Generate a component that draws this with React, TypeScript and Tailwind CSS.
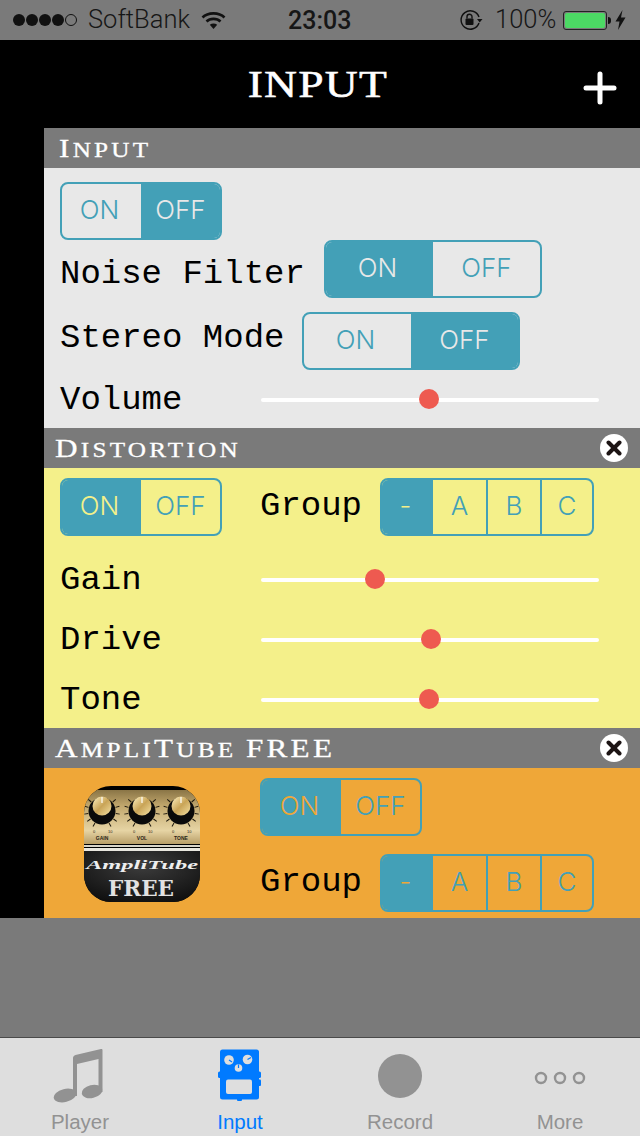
import React from 'react';

const knobs = [
  { x: 18, label: 'GAIN' },
  { x: 58, label: 'VOL' },
  { x: 97, label: 'TONE' },
];

function AmpIcon() {
  return (
    <svg width="116" height="116" viewBox="0 0 116 116">
      <defs>
        <clipPath id="ampClip">
          <rect width="116" height="116" rx="27" />
        </clipPath>
        <linearGradient id="gold" x1="0" y1="0" x2="0" y2="1">
          <stop offset="0" stopColor="#8a7546" />
          <stop offset="0.3" stopColor="#c2a86e" />
          <stop offset="0.75" stopColor="#e6d4a4" />
          <stop offset="1" stopColor="#b89e68" />
        </linearGradient>
        <linearGradient id="cap" x1="0" y1="0" x2="1" y2="1">
          <stop offset="0" stopColor="#fff3c4" />
          <stop offset="0.5" stopColor="#c9a457" />
          <stop offset="1" stopColor="#f5e2a4" />
        </linearGradient>
        <radialGradient id="lower" cx="0.5" cy="0.3" r="0.8">
          <stop offset="0" stopColor="#3c3c3c" />
          <stop offset="1" stopColor="#0c0c0c" />
        </radialGradient>
      </defs>
      <g clipPath="url(#ampClip)">
        <rect width="116" height="116" fill="#000" />
        <rect y="4" width="116" height="54" fill="url(#gold)" />
        <rect y="59" width="116" height="2" fill="#d8d4c8" />
        <rect y="62" width="116" height="3" fill="#e8e6de" />
        <rect y="65" width="116" height="51" fill="url(#lower)" />
        {knobs.map((k) => (
          <g key={k.label}>
            {[-150, -125, -100, -75, -50, 50, 75, 100, 125, 150].map((a) => (
              <line
                key={a}
                x1={k.x}
                y1="7"
                x2={k.x}
                y2="11"
                stroke="#1c170c"
                strokeWidth="1"
                transform={`rotate(${a} ${k.x} 25)`}
              />
            ))}
            <circle cx={k.x} cy="25" r="13.5" fill="#0a0a0a" />
            <circle cx={k.x} cy="20" r="9.5" fill="url(#cap)" />
            <line x1={k.x} y1="11" x2={k.x} y2="17" stroke="#fff" strokeWidth="1.2" />
            <text x={k.x - 9} y="47" fontSize="4" fill="#2a2416" fontFamily="Liberation Sans">0</text>
            <text x={k.x + 6} y="47" fontSize="4" fill="#2a2416" fontFamily="Liberation Sans">10</text>
            <text x={k.x} y="54" fontSize="5" fontWeight="700" textAnchor="middle" fill="#2a2416" fontFamily="Liberation Sans">
              {k.label}
            </text>
          </g>
        ))}
        <text x="58" y="83" fontSize="13" fontWeight="700" fontStyle="italic" textAnchor="middle" fill="#eee" textLength="112" lengthAdjust="spacingAndGlyphs" fontFamily="Liberation Serif">
          AmpliTube
        </text>
        <text x="57" y="110" fontSize="22" fontWeight="700" textAnchor="middle" fill="#e2e2e2" textLength="66" lengthAdjust="spacingAndGlyphs" fontFamily="DejaVu Serif">
          FREE
        </text>
      </g>
    </svg>
  );
}

function NoteIcon() {
  return (
    <svg className="-ml-[5px]" width="54" height="56" viewBox="0 0 54 56" fill="#929292">
      <path d="M22 10 C22 8.5 23 7.5 24.5 7 L50 1 C51 .8 51.5 1.3 51.5 2 V44 H47.5 V11 L26 16 V48 H22 Z" />
      <ellipse cx="14" cy="47.5" rx="11.5" ry="6.5" transform="rotate(-14 14 47.5)" />
      <ellipse cx="41" cy="43.5" rx="10.5" ry="6.5" transform="rotate(-14 41 43.5)" />
    </svg>
  );
}

function PedalIcon() {
  return (
    <svg width="44" height="54" viewBox="0 0 44 54" fill="#007aff">
      <rect x="2" y="0.5" width="39" height="50" rx="2.5" />
      <rect x="0" y="22.5" width="43" height="6.5" rx="1.5" />
      <rect x="38" y="30.5" width="5" height="6.5" rx="1" />
      <rect x="19" y="49" width="5" height="3" rx="1" />
      <rect x="8" y="30.5" width="26" height="14.5" rx="2" fill="#dedede" />
      <circle cx="11" cy="11" r="4.8" fill="#dedede" />
      <circle cx="29.5" cy="10.5" r="4.8" fill="#dedede" />
      <circle cx="20.5" cy="19" r="3.8" fill="#dedede" />
      <line x1="11" y1="11" x2="14" y2="13" stroke="#007aff" strokeWidth="1.2" />
      <line x1="29.5" y1="10.5" x2="33" y2="8.5" stroke="#007aff" strokeWidth="1.2" />
      <line x1="20.5" y1="19" x2="20.5" y2="15.5" stroke="#007aff" strokeWidth="1.2" />
    </svg>
  );
}

function MoreIcon() {
  return (
    <svg className="mt-1" width="52" height="16" viewBox="0 0 52 16" fill="none" stroke="#929292" strokeWidth="2.4">
      <circle cx="7" cy="8" r="5" />
      <circle cx="26" cy="8" r="5" />
      <circle cx="45" cy="8" r="5" />
    </svg>
  );
}

function StatusBar() {
  return (
    <div className="flex h-10 items-center bg-[#7a7a7a] font-['Roboto',sans-serif] text-[#161616]">
      <div className="ml-[13px] flex gap-[1px]">
        <span className="h-[12px] w-[12px] rounded-full bg-[#111]" />
        <span className="h-[12px] w-[12px] rounded-full bg-[#111]" />
        <span className="h-[12px] w-[12px] rounded-full bg-[#111]" />
        <span className="h-[12px] w-[12px] rounded-full bg-[#111]" />
        <span className="h-[12px] w-[12px] rounded-full border border-[#111]" />
      </div>
      <span className="ml-[11px] w-[104px] text-[25.5px] leading-none font-light">SoftBank</span>
      <svg className="ml-[9px]" width="25" height="19" viewBox="0 0 25 19" fill="none" stroke="#111" strokeWidth="2.6">
        <path d="M1.5 6.5 C7 1 18 1 23.5 6.5" />
        <path d="M5.5 10.5 C9 7 16 7 19.5 10.5" />
        <path d="M12.5 18 L8.8 13.8 C11 12 14 12 16.2 13.8 Z" fill="#111" stroke="none" />
      </svg>
      <span className="ml-[62px] w-[171px] text-[25px] leading-none font-medium">23:03</span>
      <svg width="24" height="20" viewBox="0 0 24 20" fill="none" stroke="#111" strokeWidth="1.4">
        <path d="M20 13 A9.2 9.2 0 1 1 20 7" />
        <path d="M18 9 L23.5 9 L20.7 12.5 Z" fill="#111" stroke="none" />
        <rect x="6.5" y="8.5" width="8" height="6.5" rx="1" fill="#111" stroke="none" />
        <path d="M8 8.5 V6.8 A2.5 2.5 0 0 1 13 6.8 V8.5" />
      </svg>
      <span className="ml-[12px] w-[68px] text-[25.5px] leading-none font-light">100%</span>
      <div className="h-[19px] w-[44px] rounded-[3px] border border-[#222] p-[1px]">
        <div className="h-full w-full rounded-[2px] bg-[#4cd964]" />
      </div>
      <span className="ml-[1px] h-[7px] w-[3px] rounded-r-sm bg-[#111]" />
      <svg className="ml-[4px]" width="11" height="20" viewBox="0 0 11 20" fill="#111">
        <path d="M7.5 0 L0.5 11.5 H4.5 L3 20 L10.5 7.5 H6 Z" />
      </svg>
    </div>
  );
}

function NavBar() {
  return (
    <div className="grid h-[88px] grid-cols-3 items-center bg-black text-white">
      <span />
      <h1 className="scale-x-[1.2] pr-[3px] text-center font-['Liberation_Serif',serif] text-[38px] leading-none tracking-[1px] [-webkit-text-stroke:0.5px_white]">INPUT</h1>
      <div className="flex justify-end pr-[23px] pt-[7px]">
        <svg width="34" height="34" viewBox="0 0 34 34" stroke="#fff" strokeWidth="5" strokeLinecap="round">
          <line x1="17" y1="3" x2="17" y2="31" />
          <line x1="3" y1="17" x2="31" y2="17" />
        </svg>
      </div>
    </div>
  );
}

function SectionHeader({ children, close, indent }: { children: React.ReactNode; close?: boolean; indent: string }) {
  return (
    <div className={`flex h-10 shrink-0 items-center justify-between bg-[#7a7a7a] pr-3 font-['Liberation_Serif',serif] text-white ${indent}`}>
      <h2 className="origin-left scale-x-[1.2] pt-[2px] text-[21px] leading-none tracking-[2.7px] uppercase [-webkit-text-stroke:0.3px_white]">{children}</h2>
      {close && (
        <span className="flex h-7 w-7 items-center justify-center rounded-full bg-white">
          <svg width="16" height="16" viewBox="0 0 16 16" stroke="#1c1414" strokeWidth="4" strokeLinecap="round">
            <line x1="2.5" y1="2.5" x2="13.5" y2="13.5" />
            <line x1="13.5" y1="2.5" x2="2.5" y2="13.5" />
          </svg>
        </span>
      )}
    </div>
  );
}

function Big({ children }: { children: React.ReactNode }) {
  return <span className="text-[26px]">{children}</span>;
}

// the selected cell's text takes the colour of the section behind it
function Segmented({
  options,
  active,
  className,
  activeText = 'text-[#e8e8e8]',
}: {
  options: string[];
  active: number;
  className: string;
  activeText?: string;
}) {
  return (
    <div className={`grid h-[58px] shrink-0 overflow-hidden rounded-lg border-2 border-[#43a0b7] font-['Inter',sans-serif] text-[26px] font-light ${className}`}>
      {options.map((opt, i) => (
        <div
          key={opt}
          className={`flex items-center justify-center pb-1 ${i === 0 ? 'pr-1' : ''} ${i > 0 && i < options.length - 1 ? 'border-r-2 border-[#43a0b7]' : ''} ${
            i === active ? `bg-[#43a0b7] ${activeText}` : 'text-[#43a0b7]'
          }`}
        >
          {opt}
        </div>
      ))}
    </div>
  );
}

const onOff = ['ON', 'OFF'];
const groups = ['-', 'A', 'B', 'C'];

function Label({ children, className }: { children: React.ReactNode; className: string }) {
  return <span className={`shrink-0 font-['Liberation_Mono',monospace] text-[34px] leading-none text-black ${className}`}>{children}</span>;
}

function Slider({ thumb }: { thumb: number }) {
  return (
    <div className="relative mt-[2px] h-[4px] w-[338px] rounded-full bg-white">
      <span
        className="absolute top-[calc(50%-1px)] h-5 w-5 -translate-x-1/2 -translate-y-1/2 rounded-full bg-[#ee5a50]"
        style={{ left: thumb }}
      />
    </div>
  );
}

function SliderRow({ label, thumb, className }: { label: string; thumb: number; className: string }) {
  return (
    <div className={`flex items-center ${className}`}>
      <Label className="w-[201px] pt-[2px]">{label}</Label>
      <Slider thumb={thumb} />
    </div>
  );
}

function Tab({ label, active, children }: { label: string; active?: boolean; children: React.ReactNode }) {
  return (
    <div className="flex flex-col items-center">
      <div className="flex h-[73px] items-center justify-center pt-[3px]">{children}</div>
      <span className={`h-[22px] font-['Liberation_Sans',sans-serif] text-[20.5px] leading-[22px] ${active ? 'text-[#007aff]' : 'text-[#929292]'}`}>
        {label}
      </span>
    </div>
  );
}

export default function App() {
  return (
    <div className="flex h-[1136px] w-[640px] flex-col overflow-hidden bg-[#7a7a7a]">
      <StatusBar />
      <NavBar />

      <div className="flex h-[790px] shrink-0 bg-black">
        <div className="w-11 shrink-0" />
        <div className="flex-1">
          {/* Input */}
          <SectionHeader indent="pl-[15px]">
            <Big>I</Big>nput
          </SectionHeader>
          <div className="h-[260px] bg-[#e8e8e8] pl-4 pt-[14px]">
            <Segmented options={onOff} active={1} className="w-[162px] grid-cols-2" />
            <div className="flex items-center">
              <Label className="w-[264px] pt-2.5">Noise Filter</Label>
              <Segmented options={onOff} active={0} className="w-[218px] grid-cols-2" />
            </div>
            <div className="mt-[14px] flex items-center">
              <Label className="w-[242px] pb-[6px]">Stereo Mode</Label>
              <Segmented options={onOff} active={1} className="w-[218px] grid-cols-2" />
            </div>
            <SliderRow label="Volume" thumb={168} className="h-[58px]" />
          </div>

          {/* Distortion */}
          <SectionHeader close indent="pl-[11px]">
            <Big>D</Big>istortion
          </SectionHeader>
          <div className="h-[260px] bg-[#f4f08a] pl-4 pt-[10px]">
            <div className="flex h-[71px] items-start">
              <Segmented options={onOff} active={0} activeText="text-[#f4f08a]" className="w-[162px] grid-cols-2" />
              <div className="ml-[38px] flex h-[58px] items-center">
                <Label className="w-[120px] pb-[2px]">Group</Label>
                <Segmented options={groups} active={0} activeText="text-[#f4f08a]" className="w-[214px] grid-cols-[51px_55px_54px_1fr]" />
              </div>
            </div>
            <SliderRow label="Gain" thumb={114} className="h-[60px]" />
            <SliderRow label="Drive" thumb={170} className="h-[60px]" />
            <SliderRow label="Tone" thumb={168} className="h-[60px]" />
          </div>

          {/* AmpliTube */}
          <SectionHeader close indent="pl-[11px]">
            <Big>A</Big>mpli<Big>T</Big>ube <Big>FREE</Big>
          </SectionHeader>
          <div className="flex h-[150px] bg-[#efa738] pl-10 pt-[10px]">
            <div className="mt-2 w-[176px] shrink-0">
              <AmpIcon />
            </div>
            <div className="flex flex-col gap-[18px]">
              <Segmented options={onOff} active={0} activeText="text-[#efa738]" className="w-[162px] grid-cols-2" />
              <div className="flex items-center">
                <Label className="w-[120px] pb-[2px]">Group</Label>
                <Segmented options={groups} active={0} activeText="text-[#efa738]" className="w-[214px] grid-cols-[51px_55px_54px_1fr]" />
              </div>
            </div>
          </div>
        </div>
      </div>

      <div className="flex-1" />

      {/* Tab bar */}
      <div className="grid h-[99px] grid-cols-4 border-t border-[#4a4a4a] bg-[#dedede]">
        <Tab label="Player">
          <NoteIcon />
        </Tab>
        <Tab label="Input" active>
          <PedalIcon />
        </Tab>
        <Tab label="Record">
          <span className="h-11 w-11 rounded-full bg-[#929292]" />
        </Tab>
        <Tab label="More">
          <MoreIcon />
        </Tab>
      </div>
    </div>
  );
}
